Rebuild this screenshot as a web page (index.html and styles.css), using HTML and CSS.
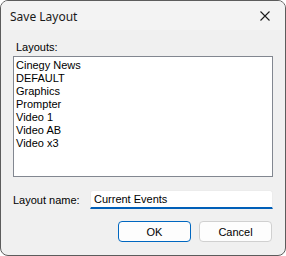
FILE: index.html
```html
<!DOCTYPE html>
<html lang="en">
<head>
    <title>Save Layout</title>
    <meta charset="UTF-8" />
    <link rel="stylesheet" href="styles.css">
</head>
<body>
    <div class="window">
        <div class="titlebar">
            <span class="title">Save Layout</span>
            <button class="close" title="Close">
                <svg width="10" height="10" viewBox="0 0 10 10">
                    <path d="M0.5 0.5 L9.5 9.5 M9.5 0.5 L0.5 9.5" stroke="#1b1b1b" stroke-width="1.1" fill="none"/>
                </svg>
            </button>
        </div>

        <div class="content">
            <div class="label">Layouts:</div>
            <ul class="listbox">
                <li>Cinegy News</li>
                <li>DEFAULT</li>
                <li>Graphics</li>
                <li>Prompter</li>
                <li>Video 1</li>
                <li>Video AB</li>
                <li>Video x3</li>
            </ul>

            <div class="name-row">
                <span class="name-label">Layout name:</span>
                <div class="textbox">Current Events</div>
            </div>

            <div class="buttons">
                <button class="btn btn-default">OK</button>
                <button class="btn">Cancel</button>
            </div>
        </div>
    </div>
</body>
</html>
```

FILE: styles.css
```css
body {
    margin: 0;
    background: #ffffff;
    font-family: 'Liberation Sans', Arial, sans-serif;
    font-size: 11px;
    color: #000;
}

.window {
    width: 286px;
    height: 256px;
    box-sizing: border-box;
    border: 1px solid #5c5c5c;
    border-radius: 8px;
    overflow: hidden;
    background: #f0f0f0;
    display: flex;
    flex-direction: column;
}

.titlebar {
    height: 29px;
    background: #f3f3f3;
    display: flex;
    align-items: center;
    justify-content: space-between;
    padding-left: 9px;
}

.title {
    font-family: 'Noto Sans', sans-serif;
    font-size: 12px;
    color: #1a1a1a;
    margin-top: 1px;
}

.close {
    width: 46px;
    height: 29px;
    border: none;
    background: transparent;
    display: flex;
    align-items: center;
    justify-content: center;
    padding: 0 0 0 6px;
}

.content {
    padding: 11px 12px 0 12px;
    display: flex;
    flex-direction: column;
}

.label {
    line-height: 13px;
    padding-left: 3px;
    margin-bottom: 2px;
}

.listbox {
    list-style: none;
    margin: 0;
    padding: 2px 2px;
    box-sizing: border-box;
    height: 121px;
    background: #fff;
    border: 1px solid #828790;
}

.listbox li {
    line-height: 13px;
}

.name-row {
    display: flex;
    align-items: center;
    margin-top: 13px;
}

.name-label {
    width: 77px;
}

.textbox {
    flex: 1;
    height: 19px;
    box-sizing: border-box;
    background: #fff;
    border: 1px solid #ececec;
    border-bottom: 2px solid #005fb8;
    border-radius: 3px 3px 0 0;
    padding: 2px 0 0 3px;
    line-height: 13px;
}

.buttons {
    display: flex;
    justify-content: flex-end;
    gap: 8px;
    margin-top: 12px;
    padding-right: 1px;
}

.btn {
    width: 73px;
    height: 21px;
    background: #fdfdfd;
    border: 1px solid #d0d0d0;
    border-radius: 4px;
    font-family: 'Liberation Sans', Arial, sans-serif;
    font-size: 11px;
    color: #000;
    padding: 0;
}

.btn-default {
    border-color: #0067c0;
}
```
